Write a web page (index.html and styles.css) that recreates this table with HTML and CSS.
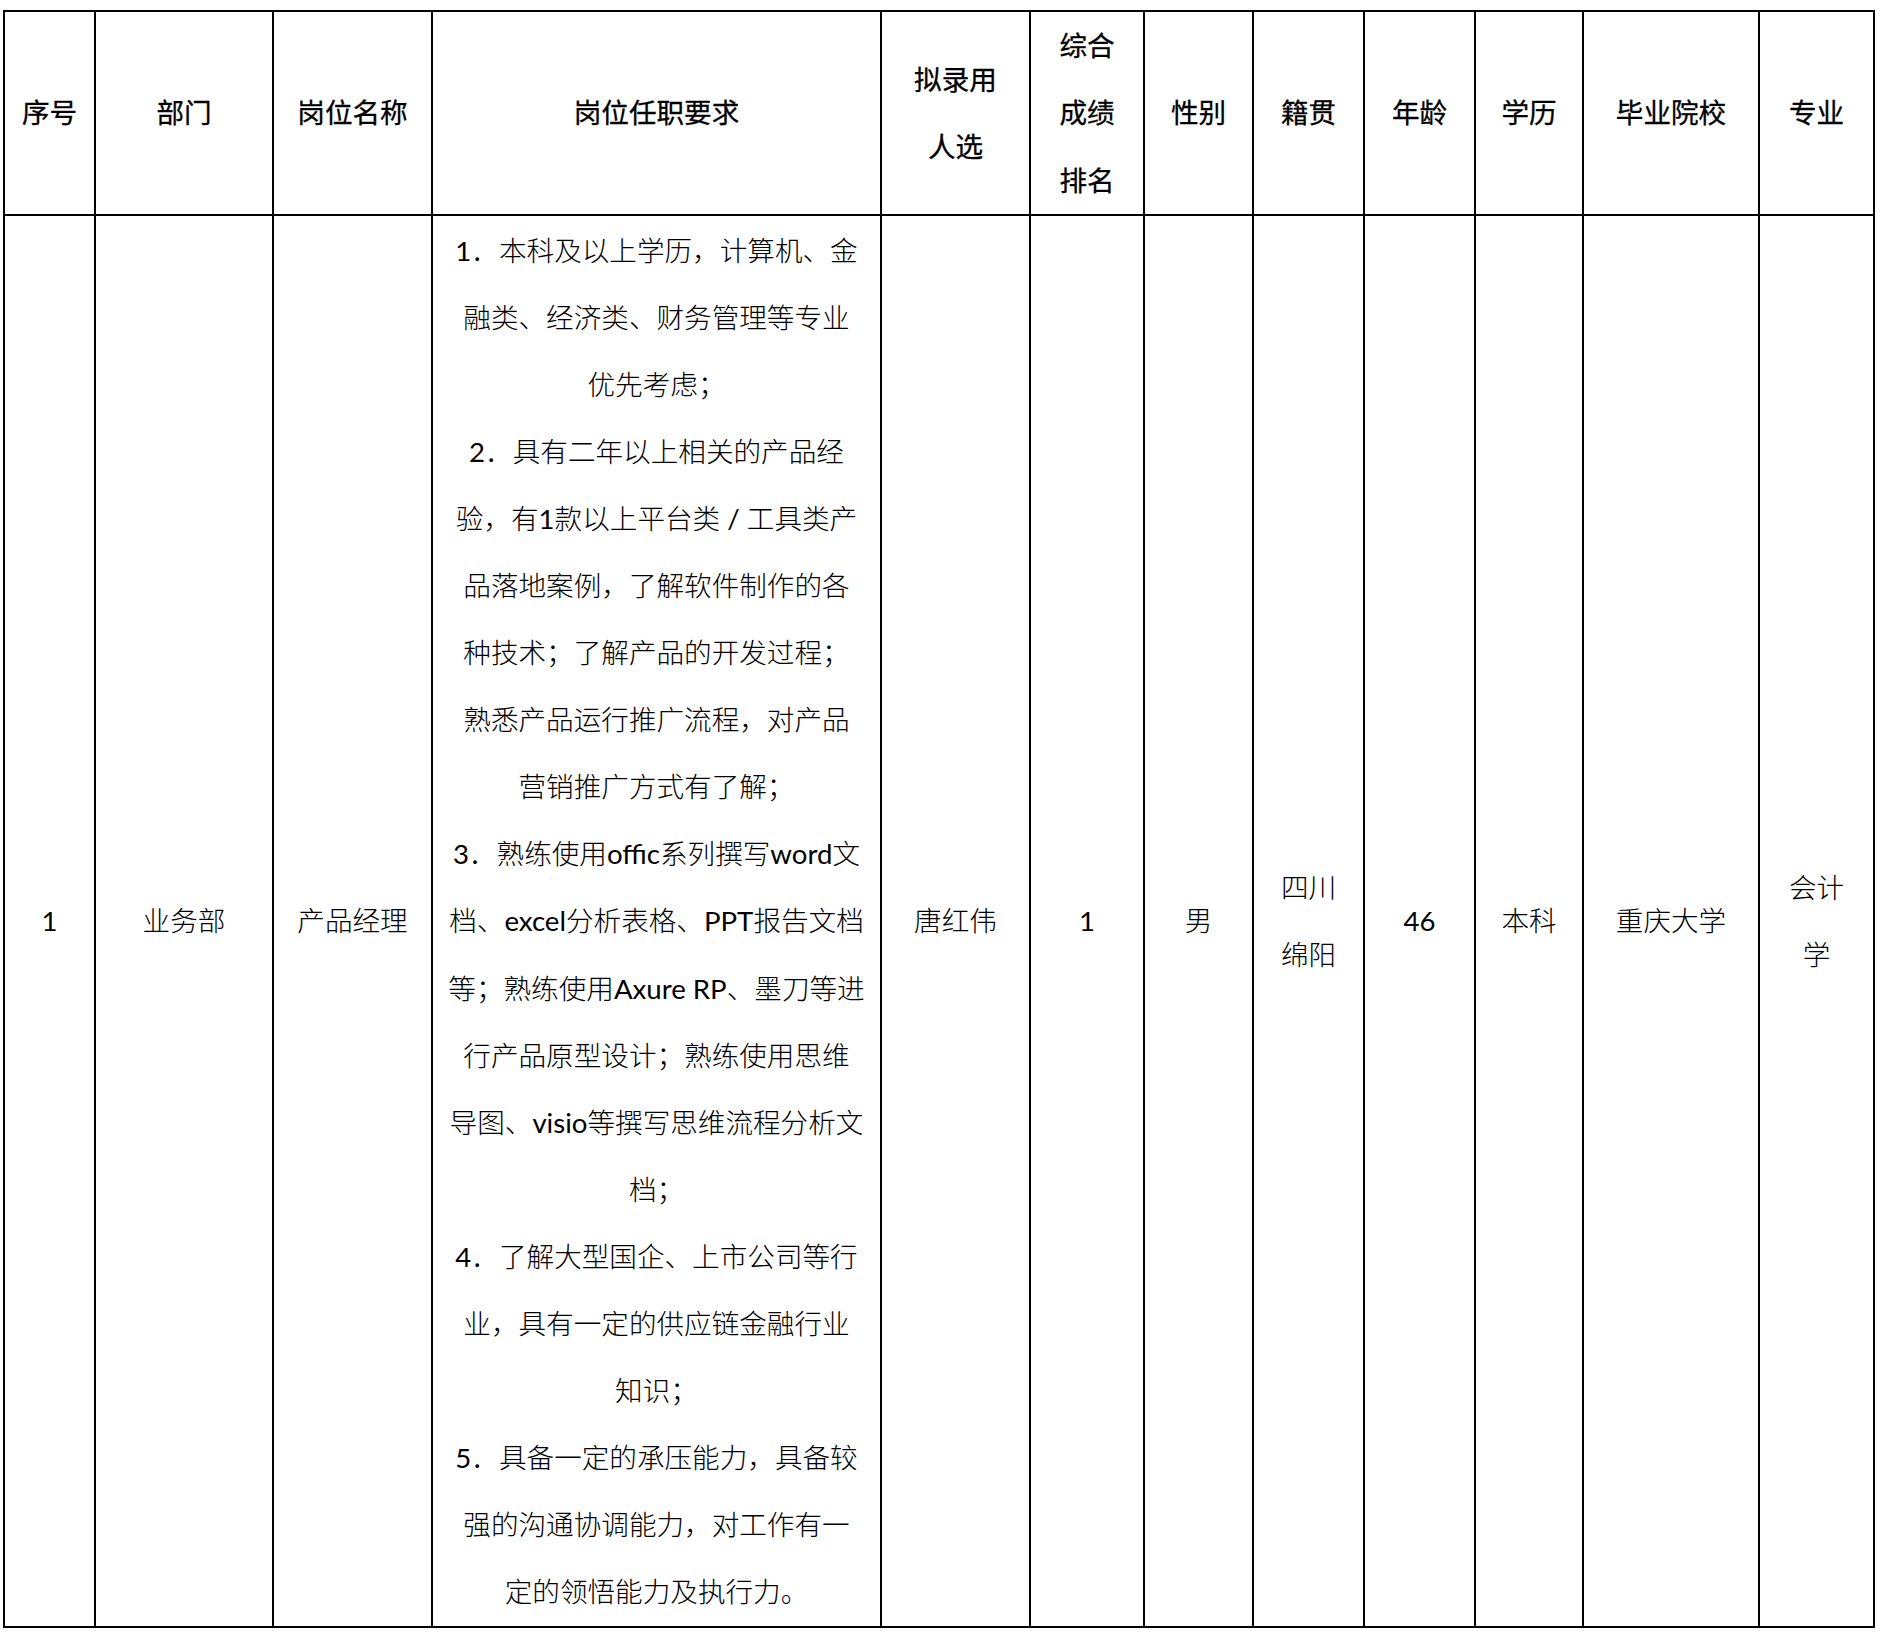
FILE: index.html
```html
<!DOCTYPE html>
<html lang="zh-CN">
<head>
<meta charset="utf-8">
<title>拟录用人员公示</title>
<link rel="stylesheet" href="styles.css">
</head>
<body>
<div class="page">
  <div class="table">
    <div class="cell head">序号</div>
    <div class="cell head">部门</div>
    <div class="cell head">岗位名称</div>
    <div class="cell head">岗位任职要求</div>
    <div class="cell head">拟录用<br>人选</div>
    <div class="cell head">综合<br>成绩<br>排名</div>
    <div class="cell head">性别</div>
    <div class="cell head">籍贯</div>
    <div class="cell head">年龄</div>
    <div class="cell head">学历</div>
    <div class="cell head">毕业院校</div>
    <div class="cell head">专业</div>

    <div class="cell lat">1</div>
    <div class="cell">业务部</div>
    <div class="cell">产品经理</div>
    <div class="cell req">
      <p><span class="lat">1</span>．本科及以上学历，计算机、金<br>融类、经济类、财务管理等专业<br>优先考虑；</p>
      <p><span class="lat">2</span>．具有二年以上相关的产品经<br>验，有<span class="lat">1</span>款以上平台类<span class="lat"> / </span>工具类产<br>品落地案例，了解软件制作的各<br>种技术；了解产品的开发过程；<br>熟悉产品运行推广流程，对产品<br>营销推广方式有了解；</p>
      <p><span class="lat">3</span>．熟练使用<span class="lat">offic</span>系列撰写<span class="lat">word</span>文<br>档、<span class="lat">excel</span>分析表格、<span class="lat">PPT</span>报告文档<br>等；熟练使用<span class="lat">Axure RP</span>、墨刀等进<br>行产品原型设计；熟练使用思维<br>导图、<span class="lat">visio</span>等撰写思维流程分析文<br>档；</p>
      <p><span class="lat">4</span>．了解大型国企、上市公司等行<br>业，具有一定的供应链金融行业<br>知识；</p>
      <p><span class="lat">5</span>．具备一定的承压能力，具备较<br>强的沟通协调能力，对工作有一<br>定的领悟能力及执行力。</p>
    </div>
    <div class="cell">唐红伟</div>
    <div class="cell lat">1</div>
    <div class="cell">男</div>
    <div class="cell">四川<br>绵阳</div>
    <div class="cell lat">46</div>
    <div class="cell">本科</div>
    <div class="cell">重庆大学</div>
    <div class="cell">会计<br>学</div>
  </div>
</div>
</body>
</html>
```
FILE: styles.css
```css
html, body {
  margin: 0;
  background: #ffffff;
}

body {
  font-family: Lato, "Noto Sans CJK SC", sans-serif;
  color: #000000;
}

.page {
  padding: 10px 0 0 3px;
}

.table {
  display: grid;
  grid-template-columns: 91px 178px 159px 449px 149px 114px 109px 111px 111px 108px 176px 115px;
  grid-template-rows: 204px 1412px;
  width: max-content;
  border-left: 2px solid #000;
  border-top: 2px solid #000;
}

.cell {
  box-sizing: border-box;
  border-right: 2px solid #000;
  border-bottom: 2px solid #000;
  display: flex;
  flex-direction: column;
  justify-content: center;
  align-items: center;
  text-align: center;
  font-size: 27.6px;
  line-height: 67.2px;
  font-weight: 300;
  white-space: nowrap;
}

.head {
  font-weight: 400;
  -webkit-text-stroke: 0.3px #000;
}

.lat {
  font-weight: 400;
}

.req {
  line-height: 67.1px;
}

.req p {
  margin: 0;
}
```
